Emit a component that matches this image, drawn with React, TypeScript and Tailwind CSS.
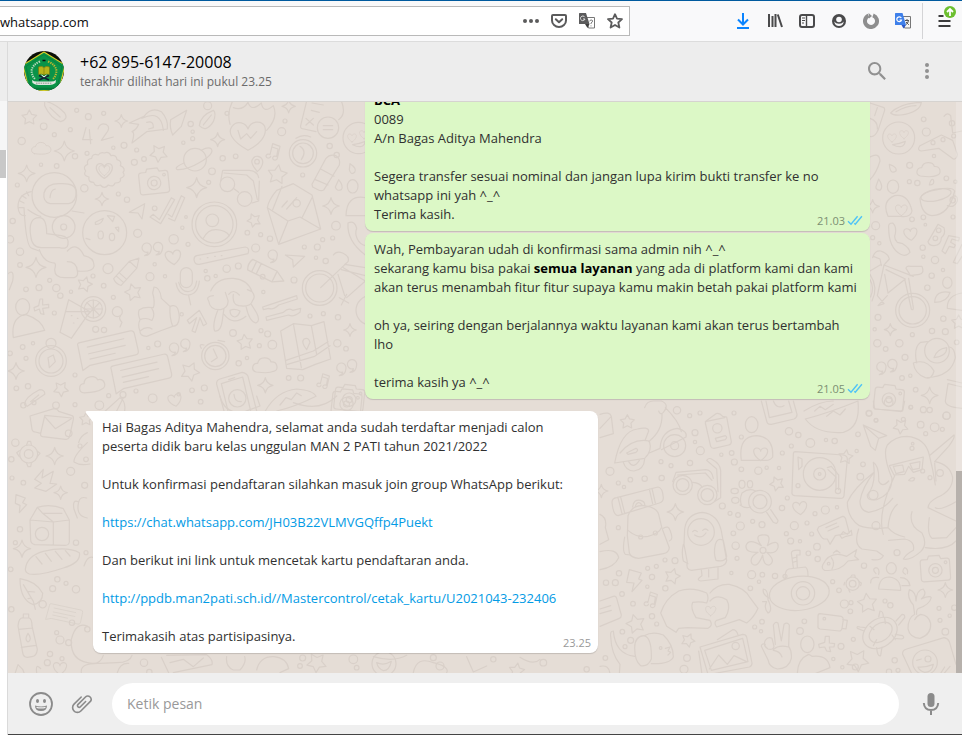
import React from "react";

type Dot = [number, number, number];

/* ---------- wallpaper doodles ---------- */

function starPath(cx: number, cy: number, r: number, turn = 0) {
  const pts: string[] = [];
  for (let i = 0; i < 10; i++) {
    const a = (Math.PI / 5) * i - Math.PI / 2 + turn;
    const d = i % 2 ? r * 0.52 : r;
    pts.push(`${(cx + d * Math.cos(a)).toFixed(1)} ${(cy + d * Math.sin(a)).toFixed(1)}`);
  }
  return `M${pts.join("L")}Z`;
}

function sparkPath(x: number, y: number, r: number) {
  const k = r * 0.16;
  return `M${x} ${y - r}Q${x + k} ${y - k} ${x + r} ${y}Q${x + k} ${y + k} ${x} ${y + r}Q${x - k} ${y + k} ${x - r} ${y}Q${x - k} ${y - k} ${x} ${y - r}Z`;
}

const HEART = "M0 20C-28 2 -26 -20 -12 -20C-5 -20 0 -14 0 -10C0 -14 5 -20 12 -20C26 -20 28 2 0 20Z";
const CLOUD = "M-26 20C-44 16 -38 -8 -22 -6C-18 -28 14 -26 18 -10C38 -12 42 14 26 18C14 24 -12 22 -26 20Z";
const NOTE = "M-10 16a7 6 0 1 1 -2 -5L-4 -22L18 -14L10 22a7 6 0 1 1 -2 -5L12 -6L-6 -12";
const COMMA = "M0 14a14 14 0 1 1 14 -12C13 16 6 24 -6 24C0 22 4 18 4 13Z";
const PENCIL = "M-50 -16H24L52 0L24 16H-50Q-58 0 -50 -16ZM-38 -16V16M-24 -16V16M24 -16V16";
const CARD = "M-84 -30Q-86 -38 -76 -38H76Q86 -38 86 -28V22Q86 34 76 34H-62L-86 44ZM-58 -20H52M-58 0H52M-58 16H18";

function At({ x, y, s = 1, r = 0, d }: { x: number; y: number; s?: number; r?: number; d: string }) {
  return <path d={d} transform={`translate(${x} ${y}) rotate(${r}) scale(${s})`} />;
}

function Scatter({ stars, sparks, dots }: { stars: Dot[]; sparks: Dot[]; dots: Dot[] }) {
  return (
    <>
      {stars.map(([x, y, r], i) => (
        <path key={`s${i}`} d={starPath(x, y, r, i * 0.7)} />
      ))}
      {sparks.map(([x, y, r], i) => (
        <path key={`k${i}`} d={sparkPath(x, y, r)} />
      ))}
      {dots.map(([x, y, r], i) => (
        <circle key={`d${i}`} cx={x} cy={y} r={r} />
      ))}
    </>
  );
}

function Camera({ x, y, r = 0 }: { x: number; y: number; r?: number }) {
  return (
    <g transform={`translate(${x} ${y}) rotate(${r})`}>
      <path d="M-44 -22Q-44 -30 -36 -30H-22L-18 -40H14L18 -30H36Q44 -30 44 -22V28Q44 36 36 36H-36Q-44 36 -44 28Z" />
      <circle cx="0" cy="4" r="20" />
      <circle cx="0" cy="4" r="9" />
      <circle cx="32" cy="-18" r="4" />
    </g>
  );
}

function Face({ x, y, r }: { x: number; y: number; r: number }) {
  return (
    <g>
      <circle cx={x} cy={y} r={r} />
      <At x={x - 20} y={y} s={0.6} d={HEART} />
      <At x={x + 16} y={y - 10} s={0.6} d={HEART} />
      <path d={`M${x - 18} ${y + 20}Q${x} ${y + 18} ${x + 20} ${y + 10}Q${x + 14} ${y + 36} ${x - 18} ${y + 20}Z`} />
    </g>
  );
}

function DoodlesUpperLeft() {
  return (
    <g transform="translate(-8 -1) scale(.33333)">
      <Scatter
        stars={[[88,50,23],[476,157,27],[832,221,30],[762,358,21],[254,550,23],[400,574,26],[570,812,29],[735,724,24],[183,864,23]]}
        sparks={[[193,150,30],[364,60,19],[653,116,21],[590,260,30],[306,294,20],[80,217,25],[108,499,30],[993,315,25],[48,810,25],[796,853,23],[1050,687,19],[866,16,20]]}
        dots={[[131,76,10],[65,120,11],[211,86,6],[265,47,9],[311,37,6],[230,28,6],[163,101,6],[225,166,8],[261,157,6],[340,140,5],[372,133,9],[410,147,6],[403,184,9],[432,174,7],[550,125,5],[572,69,8],[578,92,5],[578,113,6],[623,14,12],[681,37,6],[707,166,7],[668,172,8],[636,211,10],[626,244,6],[845,92,12],[855,60,6],[989,135,8],[170,195,7],[123,191,5],[253,262,11],[355,279,6],[381,296,8],[464,322,7],[30,415,11],[38,360,8],[60,452,11],[52,252,6],[413,397,12],[521,415,14],[564,430,6],[547,380,5],[558,348,4],[742,395,7],[782,401,6],[810,413,8],[767,441,12],[890,307,11],[1008,374,13],[968,416,6],[998,411,6],[952,438,9],[913,438,6],[948,470,5],[977,480,8],[324,503,15],[279,525,6],[311,554,7],[450,527,12],[495,526,5],[464,490,5],[680,503,11],[715,495,9],[647,525,5],[622,532,8],[617,510,5],[788,527,7],[790,573,5],[882,537,9],[149,538,6],[117,560,9],[169,561,11],[78,565,7],[181,584,8],[213,572,5],[163,636,6],[340,589,6],[352,632,15],[287,685,9],[312,687,8],[68,738,7],[99,727,5],[30,757,7],[78,772,6],[225,822,6],[445,741,5],[473,729,9],[699,696,10],[783,689,6],[803,699,9],[817,731,13],[778,734,6],[741,771,5],[716,787,8],[930,645,6],[970,638,6],[1014,649,8],[1012,727,11],[1038,743,7],[49,862,7],[84,856,8],[326,884,6],[369,881,9],[408,870,6],[458,892,13],[536,880,5],[576,868,7],[613,861,9],[602,902,7],[866,831,7],[902,831,9],[225,911,6],[298,913,13],[60,492,7],[545,640,5],[908,222,6]]}
      />
      <At x={124} y={142} s={0.8} d={CLOUD} />
      <At x={795} y={793} d={CLOUD} />
      <At x={276} y={850} s={1.05} r={-10} d={CLOUD} />
      <At x={520} y={470} s={1.05} r={-8} d={HEART} />
      <At x={525} y={898} s={0.9} r={-12} d={HEART} />
      <At x={822} y={150} d={NOTE} />
      <At x={972} y={838} s={0.9} d={NOTE} />
      <At x={440} y={440} d={COMMA} />
      <At x={474} y={438} d={COMMA} />
      <At x={522} y={740} d={COMMA} />
      <At x={556} y={728} d={COMMA} />
      <At x={818} y={461} d={COMMA} />
      <At x={1024} y={800} d={COMMA} />
      <At x={1056} y={790} d={COMMA} />
      <At x={384} y={508} s={0.95} r={-48} d={PENCIL} />
      <At x={800} y={515} s={1.1} r={26} d={PENCIL} />
      <At x={324} y={745} s={1.02} r={-13} d={CARD} />
      <At x={424} y={815} s={1.02} r={-13} d={CARD} />
      <Camera x={462} y={242} r={-6} />
      <Camera x={1048} y={892} r={6} />
      {/* number and badge */}
      <path d="M258 80L248 116H276M268 86L272 128M294 84Q300 64 318 70Q334 80 318 98L304 118L340 108" />
      <path d="M313 156q14-6 20 8q16-4 18 12q16 4 10 18q18 8 8 20q10 12-8 18q4 14-16 14q-4 14-20 6q-12 14-24 0q-16 6-20-8q-18 0-14-16q-20-4-10-18q-10-14 6-20q-4-16 12-18q2-16 20-10q6-10 18-6Z" />
      <At x={313} y={210} s={1.1} d={HEART} />
      <At x={313} y={209} s={0.75} d={HEART} />
      {/* astronaut */}
      <circle cx="163" cy="282" r="67" />
      <path d="M132 276Q140 246 182 248Q226 246 228 270Q230 304 206 308H150Q128 302 132 276ZM150 290Q152 266 166 264" />
      <path d="M94 272Q54 280 54 318Q56 346 76 344M72 320Q78 440 96 442L118 450M84 326Q110 344 122 346M92 404Q84 350 118 350Q140 350 140 398L184 404Q208 408 204 430Q202 446 178 440H126Q96 442 92 404" />
      <path d="M60 300L72 306M66 284L78 292M56 320H70M80 272L86 284" />
      <circle cx="191" cy="378" r="34" />
      <circle cx="191" cy="378" r="9" />
      <path d="M118 446Q130 482 160 486Q170 484 164 506Q164 530 194 530H222Q236 526 232 510Q230 482 202 482M202 450Q230 420 252 464Q284 470 282 496Q278 514 234 510M216 330L252 336" />
      <circle cx="314" cy="395" r="66" />
      <path d="M286 364L310 352Q304 372 286 370ZM322 344L344 346L338 362ZM346 380L356 378V392ZM258 412L270 416" />
      <ellipse cx="302" cy="402" rx="8" ry="12" />
      <ellipse cx="336" cy="408" rx="8" ry="11" />
      {/* pizza slice, comet */}
      <path d="M432 46Q454 16 484 32Q506 56 502 84L440 92L396 126Q406 94 396 92Q410 86 416 70L388 66ZM426 52Q484 24 490 88M440 64Q462 58 460 80L446 84" />
      <path d="M512 56L560 28L544 76L518 102Q508 80 512 56Z" />
      <path d="M598 74Q600 44 640 28Q650 36 640 62Q618 96 598 74ZM610 72L634 42" />
      <path d="M134 0Q168 8 194 36Q206 54 182 62Q152 52 134 14ZM150 20L180 48" />
      {/* planet */}
      <circle cx="585" cy="176" r="34" />
      <path d="M552 186Q520 200 532 206Q560 208 600 184Q644 158 634 144Q626 136 604 148" />
      {/* burning heart */}
      <path d="M744 148C690 118 684 92 696 76C712 56 738 66 744 84C752 60 784 56 794 76C804 104 776 132 744 148ZM714 88L722 114L740 98L752 112L770 92" />
      <path d="M690 70Q680 34 698 0M700 20Q728 30 744 4Q754 34 784 6Q790 40 820 14Q836 50 800 88" />
      {/* game controller card */}
      <path d="M920 0L902 74Q900 84 912 84L948 92M1024 0Q1040 40 1016 56M934 28L958 34M936 6L970 12M918 52L940 72M940 52L918 72" />
      <circle cx="984" cy="80" r="32" />
      <path d="M970 74H998M970 86H998" />
      <Face x={1076} y={111} r={47} />
      {/* watch */}
      <circle cx="909" cy="157" r="41" />
      <circle cx="909" cy="157" r="31" />
      <path d="M900 136Q922 150 904 176M888 112Q908 98 932 108" />
      {/* sunglasses */}
      <circle cx="682" cy="250" r="22" />
      <circle cx="734" cy="294" r="22" />
      <path d="M662 240L668 208H748Q772 210 776 230M778 240L776 300L756 306M700 262L716 274M672 216L740 222L760 240L772 296" />
      <path d="M772 212Q752 188 756 178Q762 164 774 166Q790 170 788 186Q786 200 772 212Z" />
      <circle cx="771" cy="182" r="7" />
      {/* paper plane and ticks */}
      <path d="M388 334L434 308L426 354L414 336ZM450 348L460 340L478 356L514 290L524 296L482 368ZM504 340L516 348L544 284L554 290L524 360L506 352" />
      {/* avatar medallion */}
      <circle cx="643" cy="370" r="67" />
      <circle cx="643" cy="370" r="56" />
      <circle cx="637" cy="358" r="19" />
      <path d="M610 412Q624 384 650 386Q678 388 688 404" />
      {/* envelope */}
      <path d="M836 430L802 320Q806 296 830 268L880 248L936 282L962 384L836 430L864 360M962 384L900 348L864 360L802 320M818 326L846 256M936 290L906 350M846 318L862 300M860 324L890 290" />
      {/* bottle */}
      <path d="M936 250L978 172Q990 158 1008 164Q1022 172 1018 192L972 266Q964 272 954 266L938 258ZM962 204L1002 226M946 236L984 252" />
      <circle cx="1010" cy="162" r="8" />
      <path d="M1050 188Q1072 202 1064 214Q1052 224 1048 206ZM1016 236Q1032 256 1024 266Q1010 272 1006 258Z" />
      <ellipse cx="1058" cy="256" rx="16" ry="20" />
      <path d="M1096 290Q1040 280 1038 344H1096M1044 366Q1064 356 1070 382Q1064 398 1072 414Q1080 430 1096 434M1044 366Q1040 420 1096 462" />
      {/* ruler, cursor */}
      <path d="M590 464L736 438Q750 440 744 458L598 490Q584 492 582 476Q582 466 590 464Z" />
      <path d="M600 474h2M622 470h2M644 466h2M664 464h2M856 462L914 466L880 498L878 476Z" />
      {/* bicycle */}
      <circle cx="959" cy="561" r="52" />
      <circle cx="959" cy="561" r="42" />
      <path d="M962 560L1044 482Q1050 466 1028 456Q1010 448 1000 462M1034 490L1096 500M1024 506L1096 524M1014 520L1034 584M1030 500L1096 540L1040 590M1018 590L1046 606M1024 612L1040 580" />
      <circle cx="1112" cy="628" r="44" />
      {/* microphone */}
      <rect x="541" y="500" width="36" height="60" rx="18" />
      <path d="M528 546Q534 582 564 582Q594 580 598 540M536 544Q544 572 564 572Q586 572 590 540M566 584L572 612" />
      {/* monkey */}
      <path d="M632 570Q650 530 700 532Q744 536 756 572M640 584Q616 586 626 600Q630 628 662 626Q686 620 684 598L676 574M700 580Q696 610 716 614Q752 620 758 598Q768 586 756 572L742 566M654 626Q636 670 644 690Q664 694 668 650L672 622M738 616Q748 662 768 666Q782 660 770 636L754 610M672 640Q700 676 738 646M686 580Q700 562 718 582M690 628Q704 622 720 630Q716 646 704 648Q690 646 690 628Z" />
      {/* thumbs up */}
      <path d="M462 558Q480 558 484 592L510 616L518 614Q536 610 538 650Q536 676 518 676L480 690L440 706Q418 704 420 690Q412 672 420 656Q412 636 418 626Q432 616 460 620Q466 604 458 576ZM420 656Q440 648 454 658M420 690Q440 674 456 684M510 616Q508 650 518 676M454 620Q468 640 456 658" />
      {/* arrow, tools */}
      <path d="M562 658L598 628L620 668L610 674L600 650L586 694L576 690L590 650L568 668ZM788 618L812 610L890 584L892 594L836 612Q820 628 806 622L790 626ZM798 648L850 634Q866 618 878 628L902 622L900 634Q880 650 866 642L800 658Z" />
      {/* drink */}
      <path d="M206 596L270 632L214 712L180 694ZM196 632H264M214 644h2M232 652h2M220 666h2" />
      <circle cx="280" cy="624" r="37" />
      <circle cx="280" cy="624" r="27" />
      <path d="M280 597V651M253 624H307M261 605L299 643M299 605L261 643M362 644Q354 652 366 664L360 678" />
      {/* person and plus */}
      <ellipse cx="68" cy="618" rx="21" ry="25" />
      <path d="M40 710Q32 650 76 640Q124 656 134 688ZM120 594L128 594L128 612L146 610L146 620L128 622L132 640L122 638L118 624L104 630L102 620L116 614ZM22 520Q44 500 38 540L28 566" />
      {/* compass */}
      <circle cx="153" cy="780" r="46" />
      <circle cx="153" cy="780" r="36" />
      <circle cx="153" cy="727" r="15" />
      <path d="M144 770L160 762L166 782L148 800Z" />
      {/* stop watch */}
      <circle cx="646" cy="765" r="41" />
      <circle cx="646" cy="765" r="32" />
      <path d="M640 744L652 770L634 782M654 718L674 722M604 742Q594 728 612 732" />
      {/* folded map */}
      <path d="M842 690L880 668L934 674L972 662L992 774L946 790L908 806L860 802ZM880 668L904 800M934 674L950 760M858 778L940 750L984 722M862 790L944 766L990 734M920 746Q902 724 912 714Q926 708 930 724Z" />
      {/* phone */}
      <path d="M650 850Q648 838 660 834L726 814Q740 816 744 826L770 930M650 850L672 930M664 848L728 828L752 930M664 848L684 930M686 836L704 830" />
      <circle cx="712" cy="892" r="26" />
      <path d="M702 880Q704 904 724 902" />
      <path d="M796 930Q830 870 890 864Q940 868 948 886Q880 920 830 930M840 912L858 890L874 896L890 876L904 884M74 912Q72 890 118 866Q136 866 134 880L82 916ZM92 902L116 882M316 930L360 890Q378 900 374 930M370 890L350 930" />
    </g>
  );
}

function DoodlesLowerRight() {
  return (
    <g transform="translate(592 299) scale(.33333)">
      <Scatter
        stars={[[82,63,22],[902,76,23],[737,168,22],[531,248,22],[217,526,24],[107,669,29],[264,718,21],[802,607,30],[773,778,34]]}
        sparks={[[226,333,25],[1036,567,22],[4,270,20]]}
        dots={[[231,28,11],[269,44,6],[300,36,6],[402,36,6],[285,95,9],[301,149,12],[285,123,5],[364,161,5],[395,156,7],[424,108,6],[403,183,9],[270,186,8],[183,182,6],[213,194,6],[185,231,8],[30,211,12],[55,246,6],[91,236,7],[72,258,5],[134,233,8],[567,91,11],[595,102,8],[631,126,13],[678,117,5],[704,120,8],[574,135,6],[547,156,6],[475,209,11],[424,205,7],[500,200,5],[537,201,5],[807,37,9],[828,58,5],[962,71,10],[932,19,6],[989,27,8],[1004,79,13],[977,98,6],[1039,44,11],[1027,85,6],[774,100,7],[770,150,5],[789,190,7],[781,227,10],[562,291,6],[546,321,8],[621,366,6],[645,338,6],[676,327,12],[711,319,5],[367,315,9],[390,337,6],[414,342,7],[458,361,6],[486,371,9],[421,375,12],[400,397,7],[407,434,11],[411,472,6],[394,516,5],[583,374,12],[559,398,6],[572,420,9],[635,399,6],[651,437,10],[600,421,5],[625,457,7],[653,474,8],[55,380,6],[195,477,6],[225,479,9],[169,496,6],[143,502,6],[156,528,8],[196,562,8],[142,557,5],[57,517,8],[18,545,8],[46,545,9],[66,579,7],[99,608,7],[156,646,8],[170,669,6],[67,692,7],[92,718,9],[455,521,12],[487,521,7],[477,542,5],[525,525,8],[451,562,7],[555,526,6],[698,542,6],[717,568,7],[733,609,12],[753,605,6],[751,631,7],[855,600,6],[871,613,8],[792,494,8],[891,455,9],[613,661,7],[600,690,10],[464,678,6],[486,662,7],[483,691,5],[723,736,9],[760,715,6],[700,774,5],[261,771,10],[252,805,12],[75,737,6],[16,771,7],[727,799,5],[766,798,9],[884,778,8],[894,808,6],[867,812,8],[1017,622,6],[1049,644,5],[1036,692,10],[1020,658,6],[1063,620,8],[936,142,6],[938,128,4],[968,210,6],[990,230,6]]}
      />
      <At x={600} y={322} s={0.95} r={-6} d={HEART} />
      <At x={155} y={594} s={0.95} d={NOTE} />
      {/* scooter */}
      <path d="M134 20Q140 0 160 0H184Q210 10 190 34Q180 44 176 30M186 40Q188 90 146 122M196 20Q236 60 244 92M44 186Q62 90 112 84Q144 76 146 90L136 116M44 186L134 172Q158 150 148 120Q98 110 60 156M80 156L108 142Q118 146 108 154L84 160ZM148 156L180 142Q184 88 232 82Q264 90 258 108L184 146" />
      <circle cx="224" cy="134" r="33" />
      <circle cx="224" cy="134" r="12" />
      <path d="M70 184Q78 210 102 210Q132 206 134 174M86 182Q100 206 118 178" />
      {/* id card and portrait */}
      <path d="M318 60L348 38Q358 34 368 46L380 48L394 122Q394 130 386 132L342 142Q334 142 332 136L316 66ZM316 62L374 50M346 112L376 104Q384 108 376 116L350 122Z" />
      <circle cx="352" cy="82" r="14" />
      <ellipse cx="455" cy="71" rx="19" ry="24" />
      <path d="M424 178Q414 106 470 104Q522 108 518 168Q510 180 494 178ZM424 178H470" />
      <At x={482} y={160} s={0.95} d={HEART} />
      {/* photo frame */}
      <path d="M484 0L500 60Q502 72 514 70L582 54Q594 48 590 36L580 0M498 0L508 50L576 34L566 0M520 0Q530 26 552 14" />
      {/* taco */}
      <path d="M612 30Q660 0 700 0M616 54Q680 38 774 0Q782 80 730 94Q650 100 616 54ZM644 30L660 16L676 26L700 10M680 46L700 30L720 42L736 24" />
      {/* turntable */}
      <path d="M586 152L730 162Q742 164 742 174L732 284Q730 294 720 292L584 284Q574 282 576 272L580 160Q580 152 586 152Z" />
      <circle cx="659" cy="219" r="49" />
      <circle cx="659" cy="219" r="18" />
      <circle cx="659" cy="219" r="4" />
      <path d="M682 200L694 196L716 222V266M684 206L708 228V264" />
      <circle cx="714" cy="270" r="8" />
      <circle cx="594" cy="254" r="6" />
      <path d="M594 168L606 174V196L596 206Z" />
      {/* paper plane */}
      <path d="M790 72L860 104L836 112L826 148L812 136ZM790 72L836 112" />
      {/* octopus */}
      <path d="M876 232Q846 160 862 132Q886 106 920 106Q976 110 988 162Q1000 210 1006 252M868 194L970 168L966 206L940 214L926 196L914 220L882 222ZM880 196L908 192L912 212L888 218ZM930 188L960 182L958 202L938 206ZM876 232Q876 280 830 296Q800 300 802 282Q830 250 820 184Q838 196 836 240Q846 262 866 240M822 214Q760 262 742 304Q742 350 778 374Q810 386 864 380M822 214Q786 260 780 300Q780 330 806 334Q850 328 878 292M864 380Q868 330 892 310M864 380Q882 402 914 408M936 332Q924 374 966 396Q984 430 962 452Q930 480 910 474Q918 460 940 448Q946 420 914 414L866 418M776 384Q760 430 786 444L830 450L850 464Q842 480 816 476M988 164L1062 102Q1066 110 1046 136L1004 182Q1050 190 1058 230Q1058 270 1010 290Q986 302 984 320L1068 360M1004 186L1008 240M1068 302Q1020 330 1006 320M988 350Q980 400 996 412L1040 410L1068 380M976 440Q1040 450 1068 420M884 224Q830 340 850 400" />
      <circle cx="820" cy="282" r="14" />
      <circle cx="828" cy="374" r="12" />
      <circle cx="1020" cy="216" r="10" />
      <path d="M926 238Q936 226 944 232Q942 244 926 238Z" />
      {/* glasses */}
      <circle cx="248" cy="252" r="29" />
      <circle cx="248" cy="252" r="19" />
      <circle cx="322" cy="282" r="29" />
      <circle cx="322" cy="282" r="19" />
      <path d="M218 242L228 214L318 206Q336 208 340 232M232 222L316 216L336 238M278 244Q300 246 306 258M320 178Q326 168 338 176Q360 188 362 208L362 290L346 300M320 178L350 204L354 272" />
      {/* backpack */}
      <path d="M36 304Q36 292 50 290L174 258Q188 260 190 290Q190 302 178 306L54 344Q40 344 36 304ZM54 290L66 338M62 288L74 336M148 264L158 308M156 262L166 306M82 404L84 344Q96 312 130 314Q170 318 176 340L186 382L208 440Q206 456 190 458L116 472Q92 470 88 456Z" />
      <path d="M84 388Q112 412 144 406Q178 398 184 380M74 408Q66 450 76 460L92 462M190 382Q206 372 210 388Q222 416 208 420M98 318Q100 294 122 298Q136 302 134 314M106 316Q110 302 120 306L126 312" />
      <circle cx="122" cy="408" r="6" />
      <circle cx="166" cy="396" r="6" />
      {/* magnifier and paw */}
      <circle cx="480" cy="302" r="34" />
      <circle cx="480" cy="302" r="21" />
      <path d="M500 334L520 364Q534 372 534 358L512 326M426 276Q448 260 466 270M420 312Q436 324 452 318M426 276Q418 294 424 312" />
      <ellipse cx="404" cy="270" rx="11" ry="8" />
      <ellipse cx="406" cy="298" rx="11" ry="9" />
      <ellipse cx="426" cy="250" rx="9" ry="12" />
      <ellipse cx="450" cy="250" rx="8" ry="11" />
      {/* parka */}
      <path d="M252 430L254 384Q260 338 308 334Q354 340 364 390L380 478Q378 492 362 496L274 508Q256 504 262 484ZM250 430Q244 456 250 480L264 488M346 430Q352 408 370 418L380 466Q376 484 348 478Q340 456 346 430M304 506L306 524Q286 536 302 540L354 534V500M326 506V528" />
      <circle cx="303" cy="393" r="40" />
      <path d="M278 392Q284 384 292 392M308 388Q316 380 324 388M284 402Q304 416 318 396" />
      {/* flower */}
      <path d="M484 434Q460 400 492 402Q516 400 502 434Q538 412 534 440Q528 460 500 454Q530 480 508 492Q490 494 488 462Q472 504 456 488Q446 470 474 454Q436 456 438 434Q446 410 484 434Z" />
      <circle cx="489" cy="448" r="9" />
      {/* submarine */}
      <ellipse cx="598" cy="577" rx="90" ry="51" transform="rotate(-6 598 577)" />
      <circle cx="609" cy="577" r="35" />
      <circle cx="609" cy="577" r="20" />
      <path d="M556 532Q554 508 566 504L616 498Q624 502 624 524M580 500L574 456Q576 446 600 448V462H590L592 498M576 472L592 468M578 484L592 480M508 592Q486 580 490 564Q504 564 504 596Q520 630 504 636Q490 620 500 602L488 602" />
      {/* chat note and fish */}
      <path d="M656 378L728 346Q736 346 738 358L748 396L706 404L690 430L682 414H672Q664 412 652 386ZM678 380L710 366M684 390L716 376M720 404L730 392L742 400L754 388L756 402L738 406L726 412Z" />
      <path d="M668 492Q690 446 740 466L770 446L764 466L776 476L744 480Q720 512 674 508Q664 504 668 492ZM700 456L710 448L720 456M696 504Q706 486 694 470" />
      <circle cx="686" cy="488" r="4" />
      {/* gear and people */}
      <circle cx="758" cy="548" r="20" />
      <circle cx="758" cy="548" r="10" />
      <path d="M752 528L756 522H764L766 530M778 542L784 546L782 554M746 566L750 574M734 544L732 552" />
      <ellipse cx="874" cy="502" rx="15" ry="17" />
      <path d="M836 564Q838 528 868 528Q902 532 902 568ZM828 518Q814 504 828 500Q840 502 836 520M812 546Q812 526 836 530M916 520Q902 512 914 500Q926 504 922 518M902 530Q926 530 930 554L906 554" />
      <Camera x={1006} y={504} r={-4} />
      {/* lightning, card */}
      <path d="M88 506L124 516L116 534L126 538L96 572L102 546L80 544ZM0 600L40 586Q48 584 50 592L64 642Q64 650 58 652L0 676M0 624L32 614M0 638L34 628M0 340Q22 350 16 380L26 416L0 430M0 452Q50 440 56 470Q44 498 0 506M0 40Q30 30 34 46L40 98L0 110M0 82L34 46" />
      {/* heart hands */}
      <path d="M182 636Q196 592 236 570Q276 556 320 576Q328 590 320 606Q300 600 278 604Q270 622 288 650L330 658Q340 674 324 682L262 680L236 682L228 694L200 676L182 636ZM330 576Q352 548 388 550Q434 560 450 590L474 622Q462 650 440 666L418 656L350 678Q340 664 350 658L376 650Q394 620 380 596Q350 578 330 600" />
      <At x={332} y={630} s={0.7} d={HEART} />
      {/* dog */}
      <path d="M32 706Q30 690 40 690Q46 760 104 766M104 740Q104 706 132 704Q156 710 154 774Q144 798 122 794Q104 780 104 740M132 704Q160 690 190 702Q220 730 220 768Q210 790 154 788M32 706Q34 760 60 790L58 820M0 796Q28 790 30 820M196 742L210 738L204 750L212 754L204 762" />
      <circle cx="182" cy="741" r="4" />
      {/* picture */}
      <path d="M300 738L428 700Q438 700 440 708L456 786Q456 796 448 798L330 820M300 738L324 820M314 748L428 712L444 782L334 808ZM328 804L356 762L382 790L402 764L440 782M352 716L398 686Q410 686 414 702M296 750L306 820" />
      <circle cx="407" cy="735" r="11" />
      {/* hand sign */}
      <path d="M526 730L520 672Q526 660 534 666L544 720L552 670Q562 662 568 672L566 736Q576 750 574 772Q568 802 532 804Q508 800 504 776L484 736Q484 726 496 730M496 718Q504 706 516 712L522 736Q520 748 504 744Q488 734 496 718M520 746Q536 730 566 738M520 748Q540 750 546 768" />
      <ellipse cx="622" cy="730" rx="20" ry="25" />
      <path d="M592 820Q592 774 626 760L636 766Q684 760 690 800L640 820" />
      {/* battery */}
      <path d="M660 638L724 646Q730 648 730 656L726 682Q724 690 718 690L660 684Q652 682 654 674V646Q654 638 660 638ZM728 656L742 658L738 684L726 682" />
      <circle cx="673" cy="653" r="4" />
      <path d="M676 706L688 706V726L704 728L702 738L688 738L692 752L680 750L674 738L658 740L656 730L674 724Z" />
      {/* turtle */}
      <ellipse cx="840" cy="696" rx="56" ry="42" transform="rotate(-36 840 696)" />
      <ellipse cx="842" cy="694" rx="38" ry="26" transform="rotate(-36 842 694)" />
      <path d="M836 648L840 630Q850 630 850 648M888 660L906 640Q916 640 914 650L896 672M886 700L908 704Q916 712 904 714L882 712M846 738L842 764Q832 768 830 740M792 690L772 682Q768 674 780 678L796 680M810 676L822 686M854 650L856 668M876 702L886 716M830 716L820 734" />
      {/* radish */}
      <path d="M944 640Q924 650 924 684Q930 712 960 712Q994 700 992 668Q986 642 962 640Q950 644 944 656M944 640L940 612Q920 590 928 566Q948 572 948 600Q950 566 970 564Q982 580 964 594Q990 582 994 590Q988 612 956 622Q948 626 950 640" />
      {/* sticker */}
      <path d="M936 820L908 760Q906 748 920 744L1032 710Q1044 712 1048 722L1068 790M1020 820L1034 798M1030 820L1050 796" />
      <circle cx="975" cy="784" r="37" />
      <circle cx="984" cy="774" r="9" />
      <path d="M950 778L964 774M954 798Q976 800 1000 790Q996 814 974 814Q958 810 954 798M820 0L824 24L908 30L914 0" />
      <circle cx="866" cy="4" r="13" />
    </g>
  );
}

function DoodlesUpperRight() {
  return (
    <g transform="translate(852 -1) scale(.33333)">
      <Scatter
        stars={[[296,664,22]]}
        sparks={[[91,686,18],[209,883,25],[38,316,20]]}
        dots={[[191,55,7],[199,93,12],[276,67,8],[281,105,6],[219,125,6],[249,116,6],[222,165,5],[149,193,9],[148,242,6],[172,246,8],[259,232,7],[286,242,5],[47,374,12],[156,355,7],[38,410,6],[190,349,7],[196,371,4],[279,348,6],[58,427,5],[188,440,8],[190,467,5],[225,477,11],[215,524,8],[249,507,5],[202,560,8],[54,649,9],[44,685,5],[52,727,11],[77,744,7],[118,727,11],[157,701,6],[216,690,8],[256,692,9],[250,653,8],[135,769,9],[126,831,7],[151,824,5],[167,866,7],[190,926,9],[290,724,7],[27,937,8],[48,958,6],[130,955,6],[153,918,5],[260,944,11]]}
      />
      <Face x={116} y={111} r={48} />
      <Camera x={87} y={892} r={6} />
      <At x={206} y={206} s={0.95} d={CLOUD} />
      <At x={152} y={400} s={0.9} r={-6} d={HEART} />
      <At x={124} y={328} s={0.8} d={HEART} />
      <At x={64} y={797} d={COMMA} />
      <At x={97} y={789} d={COMMA} />
      {/* starfish, leaf */}
      <path d="M252 46Q262 32 272 44L278 96L306 90M278 118Q286 140 292 160Q290 176 280 174L236 142L184 150Q170 148 180 134L244 102ZM92 36Q120 6 184 4Q180 34 122 42Q100 44 92 36ZM108 32Q140 14 168 14M30 6L72 20Q76 26 72 34L54 88Q44 110 30 106M44 44L52 20M30 52Q54 60 52 84M30 168Q58 152 60 180Q50 216 30 236M88 190Q112 198 108 210Q90 222 88 190ZM56 234Q72 258 60 268Q46 266 48 256Z" />
      <ellipse cx="99" cy="257" rx="17" ry="20" />
      <path d="M208 252Q212 232 220 236Q226 252 208 252Z" />
      {/* portrait and phone */}
      <path d="M84 346Q64 300 104 284Q144 276 156 330Q152 350 122 346ZM86 380Q84 366 98 366Q110 376 106 398Q100 412 112 424L128 428Q148 440 150 454Q138 468 122 460Q86 440 86 380Z" />
      {/* cup */}
      <ellipse cx="228" cy="282" rx="46" ry="17" transform="rotate(-12 228 282)" />
      <path d="M180 292Q184 340 216 344Q268 342 284 270Q276 256 232 266Q190 272 180 292ZM272 290Q294 276 292 300Q284 322 262 314" />
      <circle cx="278" cy="298" r="8" />
      {/* letters */}
      <path d="M234 370L204 422Q206 434 222 434Q244 432 244 410Q258 400 252 380Z" />
      <circle cx="236" cy="388" r="7" />
      <circle cx="226" cy="412" r="7" />
      <path d="M266 404L246 450L256 458L268 436L282 440L286 432L272 424L276 414L296 420L298 410ZM306 430L280 484L292 488L306 466" />
      {/* bicycle */}
      <path d="M38 470Q44 448 62 450Q86 458 88 474L72 492L52 584M40 466L60 474L64 494M72 492L160 526M78 506L136 534L84 576L74 520M148 518L138 502Q138 494 152 496L186 496Q194 518 178 520L150 524M134 534L154 624Q160 630 160 620L146 532M52 584L72 608L54 614L82 584M30 510L64 490" />
      <circle cx="158" cy="628" r="51" />
      <circle cx="158" cy="628" r="41" />
      <path d="M30 520Q56 560 36 600M30 536Q44 560 32 588" />
      {/* plant, duck, jar */}
      <ellipse cx="262" cy="545" rx="14" ry="17" />
      <path d="M224 604Q226 566 270 574Q262 604 224 604ZM262 622Q260 584 306 576M262 622L306 628M170 786Q160 740 182 724L202 722M160 786Q200 772 222 810Q216 836 196 830Q164 818 160 786ZM202 830Q274 826 286 770Q284 740 268 738" />
      <circle cx="231" cy="749" r="37" />
      <path d="M222 770Q230 744 260 740Q262 764 222 770ZM262 836L306 846M264 848L256 900Q256 918 306 922M264 848L306 858" />
    </g>
  );
}

function DoodlesLowerLeft() {
  return (
    <g transform="translate(-8 294) scale(.33333)">
      <Scatter
        stars={[[258,70,20],[950,800,30],[1550,825,24]]}
        sparks={[[164,180,26],[182,290,20],[66,458,26]]}
        dots={[[70,28,8],[102,20,6],[168,28,10],[46,140,11],[206,112,10],[240,150,6],[34,190,8],[258,190,7],[212,226,12],[36,246,6],[254,268,9],[70,260,7],[60,400,8],[46,440,6],[228,440,8],[258,470,6],[172,550,8],[158,578,9],[198,562,6],[228,580,11],[32,520,7],[34,640,8],[128,625,11],[170,710,6],[216,680,8],[180,732,12],[150,774,8],[142,800,9],[186,788,6],[206,740,9],[262,700,8],[432,800,11],[448,828,8],[900,810,7],[908,786,9],[1060,790,13],[1070,815,7],[1300,785,9],[1320,810,12],[1480,790,8],[1630,800,10],[1760,820,8]]}
      />
      {/* envelopes */}
      <path d="M90 60L162 38Q172 38 176 46L214 58Q222 60 220 70L208 124Q204 132 196 130L128 122Q120 120 122 112L106 108Q98 108 96 100ZM134 58L216 66M134 60L122 112M134 62L166 98L214 68" />
      <circle cx="86" cy="174" r="27" />
      <circle cx="86" cy="174" r="13" />
      <path d="M80 146L84 136H92L94 146M112 166L120 172L112 182M58 164L50 170L58 182M80 202L84 212H92L94 202" />
      <path d="M104 250L130 220L126 246L160 226L150 262L170 264L138 286L104 276L124 262ZM48 296L76 306L68 320L80 326L58 350L60 328L46 322Z" />
      {/* milk carton */}
      <path d="M90 372L112 334Q150 322 190 338L208 372V438Q206 448 196 448L104 446Q92 442 92 432ZM90 372L160 378L208 372M160 378V446M112 334L128 352L160 378M128 352H186" />
      <circle cx="126" cy="414" r="20" />
      <path d="M236 318Q216 308 222 340L232 366M260 306Q240 300 236 318Q226 360 262 366M76 520Q80 480 130 466Q200 450 238 470Q244 500 190 516Q120 540 88 534Q76 530 76 520ZM108 482L126 504M136 472L154 496M166 466L186 490M196 464L210 480M252 510Q262 480 278 484" />
      {/* leaf and notes */}
      <path d="M60 548Q110 556 128 592Q128 620 100 626Q60 612 60 548ZM70 566L100 616L106 640M82 586L104 588M94 606L84 608" />
      <At x={194} y={655} s={0.6} r={12} d={CARD} />
      <path d="M54 690Q56 664 70 666L88 666Q96 670 96 690L112 760Q110 780 96 782L82 784Q70 784 68 770ZM56 700L98 696M64 754L108 748M84 712Q98 730 84 738Q72 732 84 712ZM70 666V654H86V664" />
      <path d="M214 730Q228 676 262 690M214 730Q210 790 262 800Q300 810 310 778M244 830Q240 800 300 802L350 800Q390 800 396 778M352 830Q360 800 386 802" />
      <path d="M484 784L506 830M500 778L620 776Q640 790 636 806L520 830M510 800L550 790L580 812L610 786" />
      <path d="M680 782Q676 812 700 822H720Q740 800 734 782M770 822Q780 780 822 782Q860 786 866 818L840 830M1120 782Q1180 800 1220 778M1240 830Q1250 780 1300 800Q1350 812 1340 830M1560 784Q1600 810 1620 790M1400 782L1420 828L1460 810" />
      <circle cx="1152" cy="803" r="36" />
      <path d="M1130 800Q1152 810 1174 796Q1168 824 1150 824Q1134 818 1130 800M46 830L54 806L68 820L72 830M110 830Q106 800 122 818" />
      <At x={180} y={818} s={0.9} d={HEART} />
      <path d="M262 140Q220 180 222 198Q240 210 270 204M262 110Q240 120 236 140M660 0Q670 46 720 52L780 30L770 0M880 20Q960 50 1010 0" />
      <Camera x={1040} y={20} r={6} />
    </g>
  );
}

function Wallpaper() {
  return (
    <svg
      aria-hidden="true"
      className="absolute inset-0 h-full w-full fill-none stroke-[#d9d0c9]"
      strokeWidth="3.6"
      strokeLinecap="round"
      strokeLinejoin="round"
    >
      <DoodlesUpperLeft />
      <DoodlesLowerLeft />
      <DoodlesUpperRight />
      <DoodlesLowerRight />
    </svg>
  );
}

/* ---------- browser toolbar ---------- */

function ToolButton({ label, children }: { label: string; children: React.ReactNode }) {
  return (
    <button type="button" aria-label={label} className="flex h-8 w-8 items-center justify-center">
      {children}
    </button>
  );
}

function BrowserBar() {
  return (
    <div className="flex h-[42px] shrink-0 items-center border-t border-b border-t-[#005a9e] border-b-[#dcdcdc] bg-[#f9f9fa]">
      <div className="flex h-[30px] w-[630px] shrink-0 items-center border border-l-0 border-[#b9b9b9] bg-white">
        <input
          aria-label="Address"
          defaultValue="whatsapp.com"
          className="h-7 min-w-0 flex-1 bg-transparent pt-[2px] text-[13px] text-[#0c0c0d] outline-none"
        />
        <button type="button" aria-label="Page actions" className="flex h-7 w-7 items-center justify-center">
          <svg width="18" height="6" viewBox="0 0 18 6" fill="#5b5b5c">
            <circle cx="3" cy="3" r="2" />
            <circle cx="9" cy="3" r="2" />
            <circle cx="15" cy="3" r="2" />
          </svg>
        </button>
        <button type="button" aria-label="Save to Pocket" className="flex h-7 w-7 items-center justify-center">
          <svg width="16" height="16" viewBox="0 0 16 16" fill="none" stroke="#5b5b5c" strokeWidth="2" strokeLinecap="round" strokeLinejoin="round">
            <path d="M2 2h12q1 0 1 1v4.500a7 6.500 0 0 1-14 0V3q0-1 1-1Z" />
            <path d="M4.800 6.300L8 9.300l3.200-3" />
          </svg>
        </button>
        <button type="button" aria-label="Translate this page" className="flex h-7 w-7 items-center justify-center">
          <svg width="16" height="16" viewBox="0 0 16 16">
            <path d="M7 4.500h8.500v10.500H9.500z" fill="#fff" stroke="#777" />
            <path d="M0 .500q0-.5.5-.5H7l3.500 11H.500Q0 11 0 10.500z" fill="#5b5b5c" />
            <path d="M6 11h4.500L8.500 15z" fill="#3c3c3c" />
            <path d="M5.800 4.200A2.300 2.300 0 1 0 6 6H4" fill="none" stroke="#e4e4e4" />
            <path d="M10.500 8q1.500-2 3-.5q.5 1.500-1.500 2.500v1M12 12.500v.8" fill="none" stroke="#777" />
          </svg>
        </button>
        <button type="button" aria-label="Bookmark this page" className="flex h-7 w-7 items-center justify-center">
          <svg width="16" height="16" viewBox="0 0 16 16" fill="none" stroke="#5b5b5c" strokeWidth="1.800" strokeLinejoin="round">
            <path d="M8 1.200l2 4.500 5 .5-3.700 3.300 1.100 5L8 12l-4.400 2.500 1.100-5L1 6.200l5-.5z" />
          </svg>
        </button>
      </div>
      <div className="ml-auto flex items-center">
        <ToolButton label="Downloads">
          <svg width="14" height="16" viewBox="0 0 14 16" fill="none" stroke="#0a84ff" strokeWidth="2">
            <path d="M7 0v11M2 6.500l5 5 5-5M1 15h12" />
          </svg>
        </ToolButton>
        <ToolButton label="Library">
          <svg width="16" height="16" viewBox="0 0 16 16" fill="none" stroke="#4a4a4b" strokeWidth="2">
            <path d="M2 1v13M5.500 3v11M8.500 1v13M10.800 1.500l4.200 12.500" />
          </svg>
        </ToolButton>
        <ToolButton label="Sidebars">
          <svg width="16" height="14" viewBox="0 0 16 14" fill="none" stroke="#4a4a4b" strokeWidth="2">
            <rect x="1" y="1" width="14" height="12" rx="2" />
            <path d="M7.500 1v12" strokeWidth="1.400" />
            <path d="M3 4h3M3 6.500h3M3 9h2" strokeWidth="1" />
          </svg>
        </ToolButton>
        <ToolButton label="Account">
          <svg width="14" height="14" viewBox="0 0 14 14">
            <circle cx="7" cy="7" r="7" fill="#4a4a4b" />
            <circle cx="7" cy="5.500" r="2.800" fill="#f9f9fa" />
            <path d="M2.200 7.500q.8 4.500 4.800 4.500t4.800-4.500q-1.500 2.200-4.800 2.200t-4.800-2.200Z" fill="#f9f9fa" />
          </svg>
        </ToolButton>
        <ToolButton label="Download manager">
          <svg width="16" height="16" viewBox="0 0 16 16" fill="none" stroke="#8e8e8e" strokeWidth="4">
            <path d="M10 2.400a6 6 0 1 1-4.500.2" />
            <path d="M5.500 0l.5 5.500L9 3z" fill="#8e8e8e" stroke="none" />
          </svg>
        </ToolButton>
        <ToolButton label="Google Translate">
          <svg width="16" height="16" viewBox="0 0 16 16">
            <path d="M7 3.500h8.500v11.500H9.500z" fill="#f4f4f4" stroke="#777" />
            <path d="M0 .500q0-.5.5-.5H7.500L11 12H.500Q0 12 0 11.500z" fill="#3f80ea" />
            <path d="M6.500 12H11l-2.500 3.500z" fill="#2a56c6" />
            <path d="M6.300 5A2.400 2.400 0 1 0 6.500 7H4.500" fill="none" stroke="#fff" strokeWidth="1.200" />
            <path d="M10 7.500h4M12 6v1.500M13.500 7.500q-.5 3-2.500 4M11 9l2.800 2.800" fill="none" stroke="#555" />
          </svg>
        </ToolButton>
        <div className="ml-[3px] h-9 w-px bg-[#d4d4d6]" />
        <button type="button" aria-label="Open menu, update available" className="flex h-9 w-[39px] items-center justify-center">
          <svg width="28" height="32" viewBox="0 0 28 32">
            <path d="M9.500 11h5M9.500 16h12M9.500 21h12" stroke="#3c3c3d" strokeWidth="2" />
            <circle cx="21" cy="7" r="6" fill="#6cbf2f" />
            <path d="M21 11V4.500M18 7l3-3 3 3" fill="none" stroke="#fff" strokeWidth="1.800" />
          </svg>
        </button>
      </div>
    </div>
  );
}

/* ---------- chat ---------- */

function GroupEmblem() {
  return (
    <svg width="40" height="40" viewBox="0 0 40 40" role="img" aria-label="Contact photo">
      <defs>
        <clipPath id="emblem">
          <circle cx="20" cy="20" r="20" />
        </clipPath>
      </defs>
      <g clipPath="url(#emblem)">
        <rect width="40" height="40" fill="#0b0f08" />
        <path d="M20 1L41 14L35 39.500H5L-1 14Z" fill="#0a9348" stroke="#d8cf2a" strokeWidth="1.200" />
        <path d="M20 3.500L38 15.500L33 37H7L2 15.500Z" fill="none" stroke="#077a3a" strokeWidth=".6" />
        <path d="M16 10.500Q8 14 7.500 20Q8 25 11 28" fill="none" stroke="#b9d8bd" strokeWidth="2" strokeDasharray="1.300 1" />
        <path d="M24 10.500Q32 14 32.500 20Q32 25 29 28" fill="none" stroke="#c2b731" strokeWidth="2" strokeDasharray="1.300 1" />
        <path d="M18.500 9.500h3" stroke="#0b0f08" strokeWidth="1.300" />
        <path d="M14.500 16q3-1.500 5.500.5q2.500-2 5.500-.5v7.500q-3-1-5.500.5q-2.500-1.500-5.500-.5z" fill="#b9b41c" stroke="#77720c" strokeWidth=".6" />
        <path d="M20 16.500v7.500" stroke="#77720c" strokeWidth=".6" />
        <path d="M15 24.500l10 4.500M25 24.500l-10 4.500" stroke="#123" strokeWidth="1.500" />
        <path d="M17.500 24l2.500 2 2.500-2" fill="none" stroke="#fff" />
        <path d="M8 29q2 1.500 5 1.500h14q3 0 5-1.500l-.5 3q-2.500 2-6 2h-11q-3.500 0-6-2z" fill="#dfe6df" />
        <path d="M12 32.200h16" fill="none" stroke="#8a948a" strokeWidth="1" strokeDasharray="1.500 .8" />
        <path d="M8 38h24" stroke="#066a33" strokeWidth="1" />
      </g>
    </svg>
  );
}

function ReadTicks() {
  return (
    <svg width="16" height="15" viewBox="0 0 16 15" fill="none" stroke="#4fc3f7" strokeWidth="1.400" role="img" aria-label="Read">
      <path d="M1 8.200l3 3 6.600-8M7.300 10.200l1 1 6.600-8" />
    </svg>
  );
}

type BubbleProps = { time: string; lastLine: string; children: React.ReactNode };

function Outgoing({ time, lastLine, children }: BubbleProps) {
  return (
    <article className="w-full max-w-[505px] shrink-0 self-end rounded-lg bg-[#dcf8c6] pt-[7px] pr-[7px] pb-[7px] pl-[9px] text-[#303030] shadow-[0_1px_1px_rgba(0,0,0,0.15)]">
      {children}
      <div className="flex h-[19px] justify-between">
        <p>{lastLine}</p>
        <div className="mt-[6px] flex h-[19px] items-center gap-[2px] text-[11px] text-[#7b8f72]">
          <time>{time}</time>
          <ReadTicks />
        </div>
      </div>
    </article>
  );
}

function Incoming({ time, lastLine, children }: BubbleProps) {
  return (
    <article className="relative mt-3 w-full max-w-[505px] shrink-0 rounded-lg rounded-tl-none bg-white pt-[7px] pr-[7px] pb-[7px] pl-[9px] text-[#303030] shadow-[0_1px_1px_rgba(0,0,0,0.15)]">
      <svg className="absolute top-0 -left-2" width="8" height="12" viewBox="0 0 8 12" aria-hidden="true">
        <path d="M8 0H2Q0 0 1 2L8 11Z" fill="#fff" />
      </svg>
      {children}
      <div className="flex h-[19px] justify-between">
        <p>{lastLine}</p>
        <time className="mt-[6px] text-[11px] text-[#999999]">{time}</time>
      </div>
    </article>
  );
}

export default function App() {
  return (
    <div className="flex h-screen flex-col overflow-hidden bg-white font-['Open_Sans','Noto_Sans',sans-serif]">
      <BrowserBar />
      <div className="flex min-h-0 flex-1">
        <aside aria-label="Chat list" className="flex w-2 shrink-0 flex-col border-r border-[#dadada]">
          <div className="h-[59px] bg-[#ededed]" />
          <div className="h-[49px] bg-[#f6f6f6]" />
          <div className="h-7 w-[6px] bg-[#c8c8c8]" />
        </aside>
        <main className="flex min-w-0 flex-1 flex-col">
          <header className="flex h-[60px] shrink-0 items-center border-b border-[#d6d3d0] bg-[#ededed] pr-[19px] pb-[2px] pl-4">
            <GroupEmblem />
            <div className="ml-4 flex-1">
              <h1 className="text-base leading-[22px] text-black">+62 895-6147-20008</h1>
              <p className="text-xs leading-[18px] text-[#6b6b6b]">terakhir dilihat hari ini pukul 23.25</p>
            </div>
            <button type="button" aria-label="Search" className="mr-[18px] flex h-8 w-8 items-center justify-center">
              <svg width="24" height="24" viewBox="0 0 24 24" fill="#919191">
                <path d="M15.900 14.300H15l-.3-.3c1-1.100 1.600-2.700 1.600-4.300 0-3.700-3-6.700-6.700-6.700S3 6 3 9.700s3 6.700 6.700 6.700c1.600 0 3.200-.6 4.300-1.600l.3.300v.8l5.100 5.100 1.500-1.500-5-5.200zm-6.200 0c-2.600 0-4.600-2.100-4.600-4.600s2.100-4.600 4.600-4.600 4.600 2.100 4.600 4.600-2 4.600-4.600 4.600z" />
              </svg>
            </button>
            <button type="button" aria-label="Menu" className="flex h-8 w-8 items-center justify-center">
              <svg width="24" height="24" viewBox="0 0 24 24" fill="#919191">
                <circle cx="12" cy="6" r="2" />
                <circle cx="12" cy="12" r="2" />
                <circle cx="12" cy="18" r="2" />
              </svg>
            </button>
          </header>

          <section aria-label="Messages" className="relative flex min-h-0 flex-1 overflow-hidden bg-[#e5ddd6]">
            <Wallpaper />
            <div className="relative flex min-w-0 flex-1 flex-col justify-end pr-[86px] pb-5 pl-[85px] text-[13px] leading-[19px]">
              <Outgoing time="21.03" lastLine="Terima kasih.">
                <p className="font-bold text-black">BCA</p>
                <p className="whitespace-pre-line">
                  {`0089\nA/n Bagas Aditya Mahendra\n\nSegera transfer sesuai nominal dan jangan lupa kirim bukti transfer ke no\nwhatsapp ini yah ^_^`}
                </p>
              </Outgoing>
              <div className="h-[2px] shrink-0" />
              <Outgoing time="21.05" lastLine="terima kasih ya ^_^">
                <p className="whitespace-pre-line">
                  {`Wah, Pembayaran udah di konfirmasi sama admin nih ^_^\nsekarang kamu bisa pakai `}
                  <strong className="text-black">semua layanan</strong>
                  {` yang ada di platform kami dan kami\nakan terus menambah fitur fitur supaya kamu makin betah pakai platform kami`}
                </p>
                <p className="mt-[19px] mb-[19px] whitespace-pre-line">
                  {`oh ya, seiring dengan berjalannya waktu layanan kami akan terus bertambah\nlho`}
                </p>
              </Outgoing>
              <Incoming time="23.25" lastLine="Terimakasih atas partisipasinya.">
                <div className="mb-[19px] flex flex-col items-start gap-[19px] whitespace-pre-line">
                  <p>{`Hai Bagas Aditya Mahendra, selamat anda sudah terdaftar menjadi calon\npeserta didik baru kelas unggulan MAN 2 PATI tahun 2021/2022`}</p>
                  <p>Untuk konfirmasi pendaftaran silahkan masuk join group WhatsApp berikut:</p>
                  <a href="https://chat.whatsapp.com/JH03B22VLMVGQffp4Puekt" className="text-[#039be5]">
                    https://chat.whatsapp.com/JH03B22VLMVGQffp4Puekt
                  </a>
                  <p>Dan berikut ini link untuk mencetak kartu pendaftaran anda.</p>
                  <a href="http://ppdb.man2pati.sch.id//Mastercontrol/cetak_kartu/U2021043-232406" className="text-[#039be5]">
                    http://ppdb.man2pati.sch.id//Mastercontrol/cetak_kartu/U2021043-232406
                  </a>
                </div>
              </Incoming>
            </div>
            <div className="relative flex w-[6px] shrink-0 flex-col justify-end bg-white/20">
              <div className="h-[202px] bg-[#b7b1ac]" />
            </div>
          </section>

          <footer className="flex h-[62px] shrink-0 items-center border-b border-[#444444] bg-[#efefef] pr-[19px] pl-5">
            <button type="button" aria-label="Emoji" className="flex h-[26px] w-[26px] items-center justify-center">
              <svg width="26" height="26" viewBox="0 0 26 26" fill="none">
                <circle cx="13" cy="13" r="11" stroke="#8b8b8b" strokeWidth="1.800" />
                <ellipse cx="9.500" cy="10" rx="1.500" ry="2" fill="#8b8b8b" />
                <ellipse cx="16.500" cy="10" rx="1.500" ry="2" fill="#8b8b8b" />
                <path d="M7 14.500q6 2 12 0q0 5.500-6 5.500t-6-5.500Z" fill="#8b8b8b" />
                <path d="M8.500 16.300q4.500 1.200 9 0" stroke="#efefef" strokeWidth="1.200" />
              </svg>
            </button>
            <button type="button" aria-label="Attach" className="ml-4 flex h-6 w-6 items-center justify-center">
              <svg width="24" height="24" viewBox="0 0 24 24" fill="#8b8b8b">
                <path d="M1.816 15.556v.002c0 1.502.584 2.912 1.646 3.972s2.472 1.647 3.974 1.647a5.580 5.580 0 0 0 3.972-1.645l9.547-9.548c.769-.768 1.147-1.767 1.058-2.817-.079-.968-.548-1.927-1.319-2.698-1.594-1.592-4.068-1.711-5.517-.262l-7.916 7.915c-.881.881-.792 2.250.214 3.261.959.958 2.423 1.053 3.263.215l5.511-5.512c.280-.280.267-.722.053-.936l-.244-.244c-.191-.191-.567-.349-.957.040l-5.506 5.506c-.180.180-.635.127-.976-.214-.098-.097-.576-.613-.213-.973l7.915-7.917c.818-.817 2.267-.699 3.230.262.500.501.802 1.100.849 1.685.051.573-.156 1.111-.589 1.543l-9.547 9.549a3.970 3.970 0 0 1-2.829 1.171 3.975 3.975 0 0 1-2.830-1.173 3.973 3.973 0 0 1-1.172-2.828c0-1.071.415-2.076 1.172-2.830l7.209-7.211c.157-.157.264-.579.028-.814L11.500 4.360a.572.572 0 0 0-.834.018l-7.205 7.207a5.577 5.577 0 0 0-1.645 3.971z" />
              </svg>
            </button>
            <input
              aria-label="Ketik pesan"
              placeholder="Ketik pesan"
              className="ml-[18px] h-[42px] min-w-0 flex-1 rounded-full bg-white px-[15px] text-sm text-[#303030] outline-none placeholder:text-[#999999]"
            />
            <button type="button" aria-label="Record voice message" className="ml-5 flex h-6 w-6 items-center justify-center">
              <svg width="24" height="26" viewBox="0 0 24 26">
                <rect x="8.500" y="2" width="7" height="14" rx="3.500" fill="#8b8b8b" />
                <path d="M4.800 12q.5 7 7.200 7t7.200-7M12 19v5" fill="none" stroke="#8b8b8b" strokeWidth="2" />
              </svg>
            </button>
          </footer>
        </main>
      </div>
    </div>
  );
}
